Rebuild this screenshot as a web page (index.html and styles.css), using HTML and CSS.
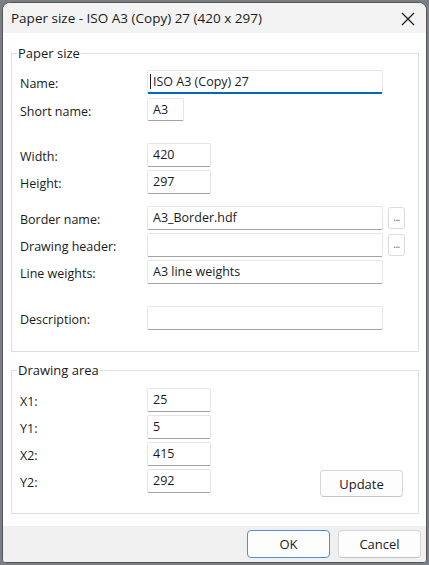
FILE: index.html
```html
<!DOCTYPE html>
<html>
<head>
<meta charset="utf-8">
<link rel="stylesheet" href="styles.css">
</head>
<body>
<div class="window">
  <div class="titlebar">
    <span class="title">Paper size - ISO A3 (Copy) 27 (420 x 297)</span>
    <svg class="close" width="14" height="14" viewBox="0 0 14 14"><path d="M1 1L13 13M13 1L1 13" stroke="#1a1a1a" stroke-width="1.2" fill="none"/></svg>
  </div>
  <div class="content">
    <fieldset class="group g1">
      <legend>Paper size</legend>
      <div class="row"><span class="lbl">Name:</span><div class="field wide focus"><span class="caret"></span>ISO A3 (Copy) 27</div></div>
      <div class="row m4"><span class="lbl">Short name:</span><div class="field short">A3</div></div>
      <div class="row m21"><span class="lbl">Width:</span><div class="field num">420</div></div>
      <div class="row m3"><span class="lbl">Height:</span><div class="field num">297</div></div>
      <div class="row m12"><span class="lbl">Border name:</span><div class="field wide">A3_Border.hdf</div><div class="dots">...</div></div>
      <div class="row m3"><span class="lbl">Drawing header:</span><div class="field wide"></div><div class="dots">...</div></div>
      <div class="row m3"><span class="lbl">Line weights:</span><div class="field wide">A3 line weights</div></div>
      <div class="row m22"><span class="lbl">Description:</span><div class="field wide"></div></div>
    </fieldset>
    <fieldset class="group g2">
      <legend>Drawing area</legend>
      <div class="row"><span class="lbl">X1:</span><div class="field num">25</div></div>
      <div class="row m3"><span class="lbl">Y1:</span><div class="field num">5</div></div>
      <div class="row m3"><span class="lbl">X2:</span><div class="field num">415</div></div>
      <div class="row m3"><span class="lbl">Y2:</span><div class="field num">292</div><div class="btn update">Update</div></div>
    </fieldset>
  </div>
  <div class="footer">
    <div class="btn ok">OK</div>
    <div class="btn">Cancel</div>
  </div>
</div>
</body>
</html>
```
FILE: styles.css
```css
* { box-sizing: border-box; }
html, body { margin: 0; padding: 0; }
body {
  width: 429px;
  height: 565px;
  background: #7a7f86;
  padding: 2px;
  font-family: "Open Sans", "Noto Sans", sans-serif;
  font-size: 12px;
  color: #1a1a1a;
  overflow: hidden;
}
.window {
  width: 425px;
  height: 561px;
  border: 1px solid #555;
  border-radius: 8px 8px 4px 4px;
  background: #fff;
  display: flex;
  flex-direction: column;
  overflow: hidden;
}
.titlebar {
  height: 30px;
  background: #f3f3f3;
  display: flex;
  align-items: center;
  padding: 0 11px 0 8px;
  flex: none;
}
.title {
  font-size: 13.5px;
  color: #1a1a1a;
  flex: 1;
}
.close { flex: none; margin-top: 1px; }
.content {
  flex: 1;
  padding: 12px 7px 0 8px;
  background: #fff;
}
.group {
  margin: 0;
  border: 1px solid #dedede;
  padding: 0 15px 0 8px;
  min-width: 0;
}
.group legend {
  padding: 0 1px;
  margin-left: -3px;
  font-size: 13px;
  color: #1a1a1a;
  line-height: 16px;
}
.g1 { padding-top: 9px; padding-bottom: 21px; }
.g2 { margin-top: 10px; padding-top: 10px; padding-bottom: 20px; }
.row {
  display: flex;
  align-items: flex-start;
  height: 24px;
}
.row.m3 { margin-top: 3px; }
.row.m4 { margin-top: 4px; }
.row.m12 { margin-top: 12px; }
.row.m21 { margin-top: 21px; }
.row.m22 { margin-top: 22px; }
.lbl {
  width: 127px;
  flex: none;
  line-height: 27px;
  font-size: 12.5px;
}
.field {
  height: 24px;
  background: #fff;
  border: 1px solid #e6e6e6;
  border-bottom: 1px solid #a2a2a2;
  border-radius: 2px;
  padding: 0 5px;
  line-height: 22px;
  font-size: 12.5px;
  color: #1a1a1a;
  flex: none;
  position: relative;
}
.field.wide { width: 236px; }
.field.short { width: 37px; height: 23px; }
.field.num { width: 64px; }
.field.focus { border-bottom: 2px solid #0067c0; padding-left: 5px; }
.caret {
  display: inline-block;
  width: 1px;
  height: 15px;
  background: #1a1a1a;
  vertical-align: -3px;
  margin-left: -3px;
  margin-right: 2px;
}
.dots {
  width: 17px;
  height: 22px;
  margin-left: 5px;
  margin-top: 1px;
  border: 1px solid #dcdcdc;
  border-radius: 3px;
  text-align: center;
  line-height: 18px;
  font-size: 10px;
  color: #4a5a7a;
  letter-spacing: -0.5px;
  flex: none;
}
.btn {
  width: 83px;
  height: 28px;
  border: 1px solid #d6d6d6;
  border-bottom-color: #c4c4c4;
  border-radius: 4px;
  background: #fdfdfd;
  text-align: center;
  line-height: 26px;
  font-size: 13px;
  color: #1a1a1a;
  flex: none;
}
.btn.update { margin-left: auto; margin-top: 1px; height: 27px; }
.footer {
  height: 36px;
  flex: none;
  background: #f0f0f0;
  display: flex;
  justify-content: flex-end;
  gap: 8px;
  padding: 4px 5px 0 0;
}
.btn.ok { border: 1px solid #4c90d6; }
```
